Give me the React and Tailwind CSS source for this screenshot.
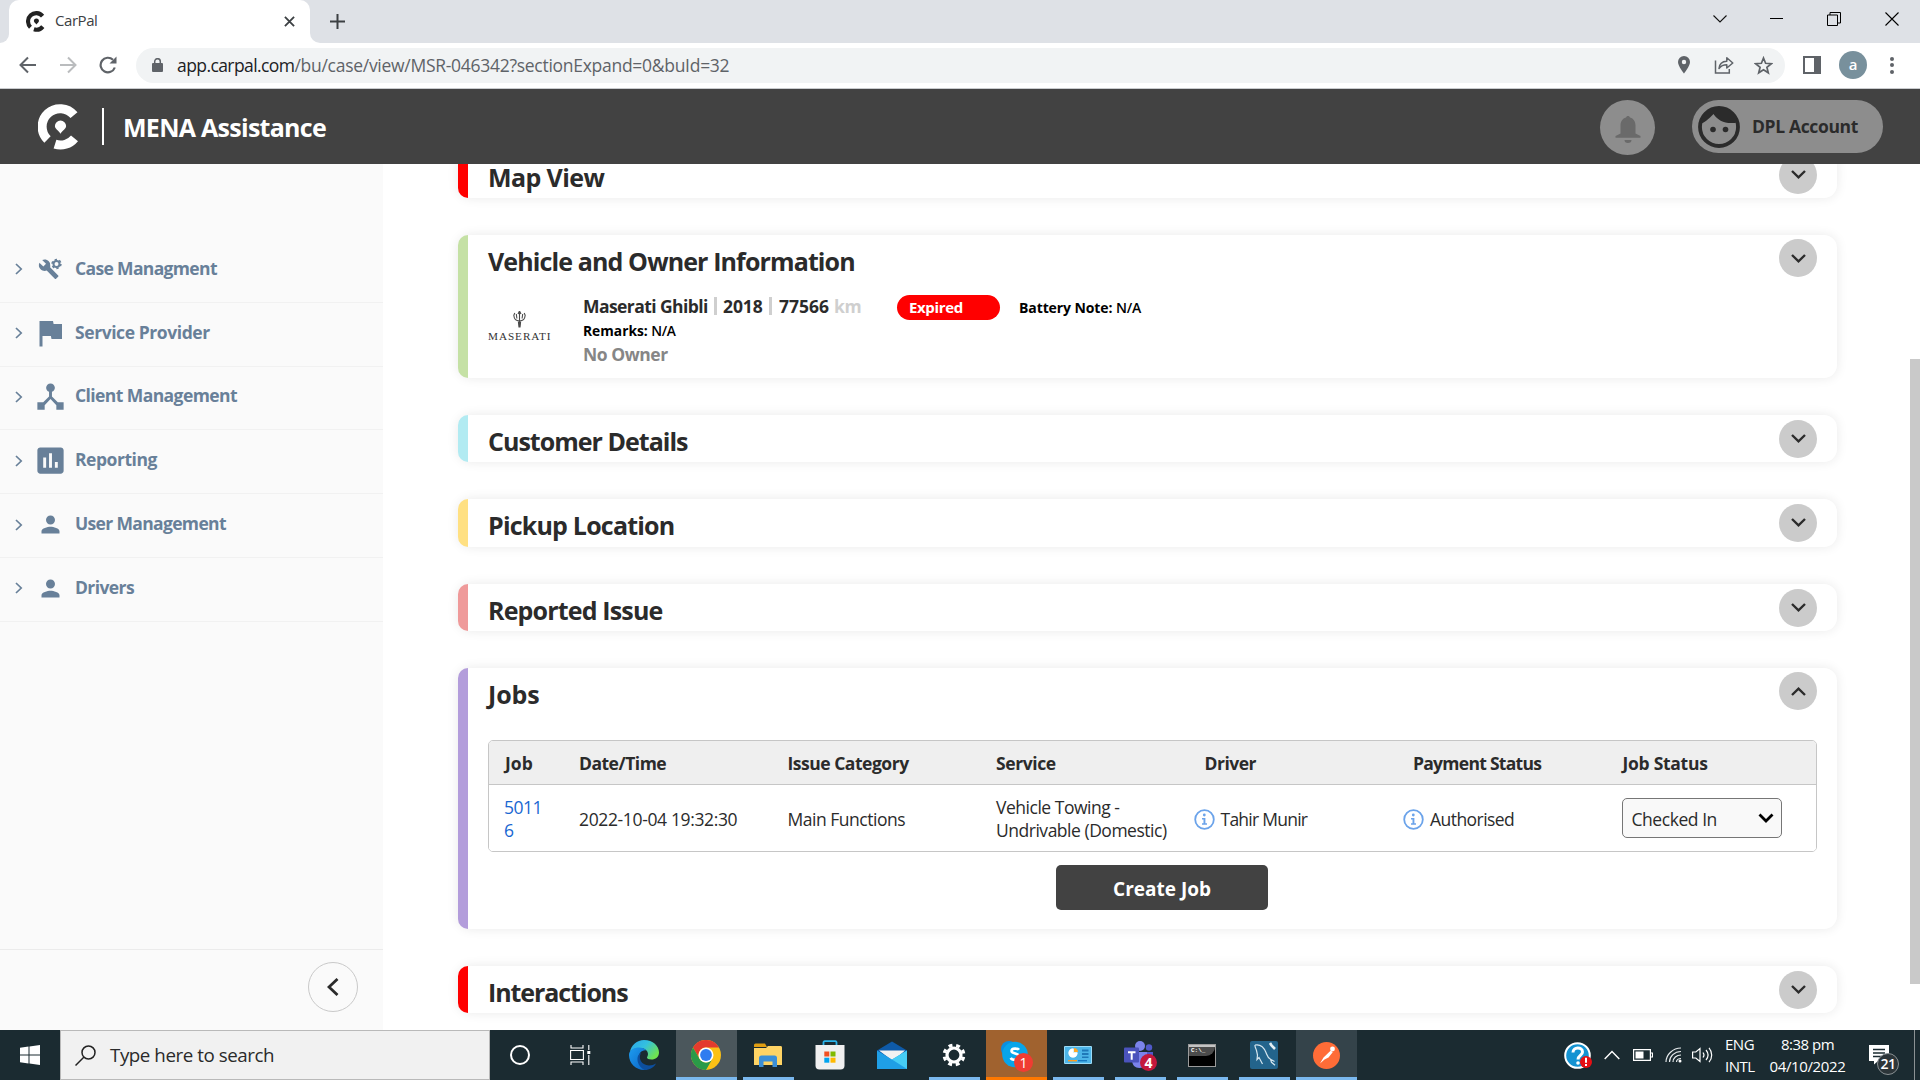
import React from "react";
import { MdFlag, MdDeviceHub, MdAssessment, MdPerson } from "react-icons/md";

function CarPalLogo({ className }) {
  return (
    <svg className={className} viewBox="0 0 41 46" fill="none">
      <path d="M9.500 35.500A18 18 0 1 1 36 11.200" stroke="currentColor" strokeWidth="9" />
      <path d="M17 40.100A18 18 0 0 0 36.500 34.300" stroke="currentColor" strokeWidth="9" />
      <path d="M22.500 16.500a5.600 5.600 0 0 1 5.600 5.600c0 2.700-3.600 4.500-5.600 7.600-2-3.100-5.600-4.900-5.600-7.600a5.600 5.600 0 0 1 5.600-5.600z" fill="currentColor" />
    </svg>
  );
}

function BrowserTabs() {
  return (
    <div className="flex h-[43px] bg-[#dee1e6]">
      <div className="flex w-[9px] bg-white">
        <div className="flex-1 rounded-br-[9px] bg-[#dee1e6]" />
      </div>
      <div className="flex h-[43px] w-[301px] items-center rounded-t-[10px] bg-white pl-[17px] pr-[15px] text-[#3c4043]">
        <CarPalLogo className="h-[21px] w-[19px] text-[#222]" />
        <span className="ml-[10px] pb-[3px] text-[15px] leading-[20px] tracking-[-0.45px]">CarPal</span>
        <svg className="ml-auto h-[11px] w-[11px]" viewBox="0 0 12 12" stroke="#3c4043" strokeWidth="2">
          <path d="M1 1l10 10M11 1L1 11" />
        </svg>
      </div>
      <div className="w-[11px] bg-white">
        <div className="h-full rounded-bl-[10px] bg-[#dee1e6]" />
      </div>
      <svg className="ml-[9px] mt-[14px] h-[15px] w-[15px]" viewBox="0 0 15 15" stroke="#3c4043" strokeWidth="2">
        <path d="M7.500 0v15M0 7.500h15" />
      </svg>
      <div className="ml-auto flex h-[37px] items-center pr-[21px]">
        <svg className="h-[8px] w-[14px]" viewBox="0 0 14 8" fill="none" stroke="#111" strokeWidth="1.1"><path d="M.5.5L7 7 13.500.5" /></svg>
        <svg className="ml-[43px] h-[14px] w-[14px]" viewBox="0 0 14 14" fill="none" stroke="#000"><path d="M0 6.500h13" /></svg>
        <svg className="ml-[43px] h-[14px] w-[14px]" viewBox="0 0 14 14" fill="none" stroke="#000"><path d="M.5 3h10v10.500H.5zM3 3V.5h10.500V11H11" /></svg>
        <svg className="ml-[44px] h-[14px] w-[14px]" viewBox="0 0 14 14" stroke="#000" strokeWidth="1.100"><path d="M.5.5l13 13M13.500.5l-13 13" /></svg>
      </div>
    </div>
  );
}

function BrowserToolbar() {
  return (
    <div className="flex h-[46px] items-center border-b border-[#c9cbce] bg-white pb-px">
      <svg className="ml-[19px] h-[18px] w-[18px]" viewBox="0 0 18 18" fill="none" stroke="#5f6368" strokeWidth="2"><path d="M17 9H2M9 1.500L1.500 9 9 16.500" /></svg>
      <svg className="ml-[22px] h-[18px] w-[18px]" viewBox="0 0 18 18" fill="none" stroke="#babcbe" strokeWidth="2"><path d="M1 9h15M9 1.500L16.500 9 9 16.500" /></svg>
      <svg className="ml-[22px] h-[18px] w-[18px]" viewBox="0 0 18 18" fill="none" stroke="#5f6368" strokeWidth="2.200"><path d="M15.800 11.500A7.300 7.300 0 1 1 14 3.800" /><path d="M17.500.5v7h-7z" fill="#5f6368" stroke="none" /></svg>
      <div className="ml-[19px] flex h-[35px] w-[1649px] items-center rounded-full bg-[#f1f3f4] pl-[16px] pr-[12px]">
        <svg className="h-[14px] w-[11px]" viewBox="0 0 11 14"><rect y="5" width="11" height="9" rx="1" fill="#5f6368" /><path d="M2.700 6V3.500a2.800 2.800 0 0 1 5.600 0V6" fill="none" stroke="#5f6368" strokeWidth="1.500" /></svg>
        <div className="ml-[14px] whitespace-nowrap text-[17.5px] leading-[24px] text-[#5f6368]">
          <span className="tracking-[-0.58px] text-[#202124]">app.carpal.com</span>
          <span className="tracking-[-0.28px]">/bu/case/view/MSR-046342?sectionExpand=0&amp;buId=32</span>
        </div>
        <svg className="ml-auto h-[18px] w-[12px]" viewBox="0 0 12 18"><path fillRule="evenodd" d="M6 0a6 6 0 0 1 6 6c0 4-6 11.500-6 11.500S0 10 0 6a6 6 0 0 1 6-6zm0 3.800a2.200 2.200 0 1 0 0 4.400 2.200 2.200 0 0 0 0-4.400z" fill="#5f6368" /></svg>
        <svg className="ml-[24px] h-[18px] w-[20px]" viewBox="0 0 20 18" fill="none" stroke="#5f6368" strokeWidth="1.500"><path d="M1.500 4.500V17h13.800v-4" /><path d="M5 12.500c.4-4.500 3-7 7.800-7.200V1.800L18.800 7l-6 5V8.800c-3.600 0-5.800 1-7.800 3.700z" strokeLinejoin="round" /></svg>
        <svg className="ml-[20px] h-[19px] w-[19px]" viewBox="0 0 19 19" fill="none" stroke="#5f6368" strokeWidth="1.700"><path d="M9.500 2l2.100 5.300 5.700.4-4.400 3.600 1.400 5.500-4.800-3-4.800 3 1.400-5.500-4.400-3.600 5.700-.4z" /></svg>
      </div>
      <div className="ml-[18px] flex h-[18px] w-[18px] border-[2.5px] border-[#5f6368]"><div className="ml-auto h-full w-[5px] bg-[#5f6368]" /></div>
      <div className="ml-[18px] flex h-[28px] w-[28px] items-center justify-center rounded-full bg-[#78909c] pb-[2px] text-[15px] font-semibold leading-none text-white">a</div>
      <div className="ml-[23px] flex flex-col gap-[2.5px]">
        <i className="h-[4px] w-[4px] rounded-full bg-[#5f6368]" />
        <i className="h-[4px] w-[4px] rounded-full bg-[#5f6368]" />
        <i className="h-[4px] w-[4px] rounded-full bg-[#5f6368]" />
      </div>
    </div>
  );
}

function AppHeader() {
  return (
    <div className="flex h-[75px] shrink-0 items-center bg-[#424242]">
      <CarPalLogo className="ml-[38px] h-[46px] w-[41px] text-white" />
      <div className="ml-[23px] h-[37px] w-[2px] bg-white" />
      <span className="ml-[19px] whitespace-nowrap text-[25px] font-bold leading-[34px] tracking-[-0.72px] text-white">MENA Assistance</span>
      <div className="ml-auto mt-[2px] flex h-[55px] w-[55px] items-center justify-center rounded-full bg-[#8d8d8d]">
        <svg className="mt-[4px] h-[27px] w-[26px]" viewBox="0 0 26 27" fill="#6a6a6a"><path d="M13 0c1 0 1.800.6 2 1.500 3.600 1 5.500 4 5.500 8V17.500l5 2.500v1.800H.5V20l5-2.500V9.500c0-4 1.900-7 5.500-8C11.200.6 12 0 13 0zM9.500 24h7a3.500 3 0 0 1-7 0z" /></svg>
      </div>
      <div className="ml-[37px] mr-[37px] flex h-[53px] w-[191px] items-center rounded-full bg-[#8d8d8d] pl-[6px]">
        <svg className="h-[42px] w-[42px]" viewBox="0 0 42 42"><circle cx="21" cy="21" r="19" fill="none" stroke="#2b2b2b" strokeWidth="3.800" /><path d="M2 18C6 17 11 13 15.500 8 20 15 28 18.500 39.500 16.500 37 6 29 2 21 2S4 8 2 18z" fill="#2b2b2b" /><circle cx="15" cy="23.500" r="2.800" fill="#2b2b2b" /><circle cx="27.500" cy="23.500" r="2.800" fill="#2b2b2b" /></svg>
        <span className="ml-[12px] whitespace-nowrap pb-[2px] text-[17.5px] font-bold leading-[24px] tracking-[-0.36px] text-[#2b2b2b]">DPL Account</span>
      </div>
    </div>
  );
}

function CaseIcon() {
  return (
    <svg className="h-[24px] w-[26px]" viewBox="0 0 26 24">
      <path transform="translate(1 1.500) scale(.89)" d="M22.700 19l-9.100-9.100c.9-2.300.4-5-1.500-6.900-2-2-5-2.400-7.400-1.300L9 6 6 9 1.600 4.700C.4 7.100.9 10.100 2.900 12.100c1.900 1.900 4.600 2.400 6.900 1.500l9.100 9.100c.4.400 1 .4 1.400 0l2.300-2.300c.5-.4.5-1.100.1-1.400z" fill="#688099" />
      <circle cx="19.500" cy="7" r="6.300" fill="#fafafa" />
      <circle cx="19.500" cy="7" r="3" fill="none" stroke="#688099" strokeWidth="2" />
      <circle cx="19.500" cy="7" r="4.400" fill="none" stroke="#688099" strokeWidth="1.600" strokeDasharray="2.300 2.300" />
    </svg>
  );
}

const NAV = [
  { label: "Case Managment", icon: <CaseIcon />, track: "tracking-[-0.65px]" },
  { label: "Service Provider", icon: <MdFlag className="h-[36px] w-[36px]" />, track: "tracking-[-0.42px]" },
  { label: "Client Management", icon: <MdDeviceHub className="h-[35px] w-[35px]" />, track: "tracking-[-0.58px]" },
  { label: "Reporting", icon: <MdAssessment className="h-[35px] w-[35px]" />, track: "tracking-[-0.46px]" },
  { label: "User Management", icon: <MdPerson className="h-[27px] w-[27px]" />, track: "tracking-[-0.66px]" },
  { label: "Drivers", icon: <MdPerson className="h-[27px] w-[27px]" />, track: "tracking-[-0.6px]" },
];

function Sidebar() {
  return (
    <div className="flex w-[383px] shrink-0 flex-col bg-[#fafafa] pt-[75px] text-[#688099]">
      {NAV.map((n) => (
        <div key={n.label} className="flex h-[63.8px] items-center border-b border-[#f1f1f1] pb-[2px]">
          <svg className="ml-[15px] h-[12px] w-[8px]" viewBox="0 0 8 12" fill="none" stroke="#688099" strokeWidth="1.700"><path d="M1 1l5.200 5L1 11" /></svg>
          <div className="ml-[7px] flex w-[40px] shrink-0 items-center justify-center">{n.icon}</div>
          <span className={`ml-[5px] whitespace-nowrap pb-[3px] text-[17.5px] font-bold leading-[24px] ${n.track}`}>{n.label}</span>
        </div>
      ))}
      <div className="mt-auto flex h-[81px] justify-end border-t border-[#ebebeb] pr-[25px] pt-[12px]">
        <div className="flex h-[50px] w-[50px] items-center justify-center rounded-full border border-[#c9c9c9]">
          <svg className="h-[18px] w-[12px]" viewBox="0 0 12 18" fill="none" stroke="#2b2b2b" strokeWidth="2.800"><path d="M10.500 1L2 9l8.500 8" /></svg>
        </div>
      </div>
    </div>
  );
}

function Section({ title, bar, track, size, open, children }) {
  return (
    <div className={`flex shrink-0 rounded-[13px] bg-white shadow-[0_0_12px_rgba(0,0,0,0.09)] ${size}`}>
      <div className={`w-[10px] shrink-0 rounded-l-[10px] ${bar}`} />
      <div className="min-w-0 flex-1 pl-[20px] pr-[20px]">
        <div className="flex h-[47px] justify-between">
          <h2 className={`mt-[14px] h-[24px] whitespace-nowrap text-[25px] font-bold leading-[24px] text-[#2b2b2b] ${track}`}>{title}</h2>
          <div className={`flex h-[38px] w-[38px] items-center justify-center rounded-full bg-[#cbcbcb] ${children ? "mt-[4px]" : "mt-[4.500px]"}`}>
            <svg className={`h-[9px] w-[15px] ${open ? "rotate-180" : ""}`} viewBox="0 0 15 9" fill="none" stroke="#2b2b2b" strokeWidth="2.400"><path d="M1 1l6.500 6.300L14 1" /></svg>
          </div>
        </div>
        {children}
      </div>
    </div>
  );
}

function VehicleInfo() {
  return (
    <div className="flex">
      <div className="mt-[27px] flex w-[95px] flex-col pt-[2px]">
        <svg className="ml-[25px] h-[17px] w-[13px]" viewBox="0 0 13 17" fill="none" stroke="#4a4a4a" strokeWidth="1.100"><path d="M6.500 0v16M5 3l1.500-3L8 3M1.800 2l-1 2.300c.3 3.700 2 5.700 5.700 5.700s5.400-2 5.700-5.700l-1-2.300M3.300 3l.6 4.500M9.700 3l-.6 4.500" /><path d="M4.800 10.500h3.400L7.500 16.500h-2z" fill="#4a4a4a" stroke="none" /></svg>
        <span className="mt-[1px] font-['Liberation_Serif',serif] text-[11.2px] leading-[14px] tracking-[0.95px] text-[#333]">MASERATI</span>
      </div>
      <div className="w-[314px] pt-[12px] text-[#2b2b2b]">
        <div className="flex h-[24px] whitespace-nowrap text-[17.5px] font-bold leading-[24px]">
          <span className="w-[131px] tracking-[-0.58px]">Maserati Ghibli</span>
          <span className="mt-[3px] h-[18px] w-[3px] bg-[#cfcfcf]" />
          <span className="ml-[6px] w-[46px] tracking-[-0.1px]">2018</span>
          <span className="mt-[3px] h-[18px] w-[3px] bg-[#cfcfcf]" />
          <span className="ml-[7px] w-[55px] tracking-[-0.02px]">77566</span>
          <span className="tracking-[-0.4px] text-[#cfcfcf]">km</span>
        </div>
        <div className="mt-[2px] h-[21px] whitespace-nowrap text-[13.8px] leading-[21px] text-black"><b>Remarks:</b> <span className="font-semibold tracking-[-0.4px]">N/A</span></div>
        <div className="mt-px text-[17.5px] font-bold leading-[24px] tracking-[-0.45px] text-[#868686]">No Owner</div>
      </div>
      <div className="mt-[13px] h-[25px] w-[103px] rounded-full bg-[#ff0000] pl-[12px] text-[15px] font-bold leading-[25px] tracking-[-0.35px] text-white">Expired</div>
      <div className="ml-[19px] mt-[13px] whitespace-nowrap text-[14px] leading-[25px] text-black"><b className="tracking-[-0.1px]">Battery Note:</b> <span className="font-semibold tracking-[-0.2px]">N/A</span></div>
    </div>
  );
}

function Info() {
  return (
    <svg className="h-[21px] w-[21px]" viewBox="0 0 21 21"><circle cx="10.500" cy="10.500" r="9.300" fill="none" stroke="#6ba3ea" strokeWidth="1.800" /><circle cx="10.300" cy="6" r="1.400" fill="#6ba3ea" /><path d="M8 9h3.400v5.200H13v1.600H8v-1.600h1.500v-3.600H8z" fill="#6ba3ea" /></svg>
  );
}

function Jobs() {
  return (
    <div className="pt-[25px]">
      <div className="h-[112px] w-[1329px] overflow-hidden rounded-[5px] border border-[#c6c6c6] whitespace-nowrap text-[17.5px] text-[#2b2b2b]">
        <div className="grid h-[44px] grid-cols-[75px_208.500px_208.500px_208.500px_208.500px_208.500px_1fr] border-b border-[#c6c6c6] bg-[#efefef] pl-[15px] font-bold leading-[45px]">
          <span className="pl-px">Job</span>
          <span className="tracking-[-0.5px]">Date/Time</span>
          <span className="tracking-[-0.48px]">Issue Category</span>
          <span className="tracking-[-0.4px]">Service</span>
          <span className="tracking-[-0.5px]">Driver</span>
          <span className="tracking-[-0.72px]">Payment Status</span>
          <span className="pl-px tracking-[-0.28px]">Job Status</span>
        </div>
        <div className="grid h-[66px] grid-cols-[75px_208.500px_208.500px_208.500px_208.500px_208.500px_1fr] items-center bg-white pl-[15px]">
          <span className="w-[38px] pt-[2px] leading-[23px] tracking-[-0.5px] text-[#1967d2]">5011<br />6</span>
          <span className="pt-[2px] tracking-[-0.36px]">2022-10-04 19:32:30</span>
          <span className="pt-[2px] tracking-[-0.48px]">Main Functions</span>
          <span className="pt-[2px] leading-[23px] tracking-[-0.48px]">Vehicle Towing -<br />Undrivable (Domestic)</span>
          <span className="-ml-[11px] flex items-center gap-[6px] pt-[2px]"><Info /><span className="tracking-[-0.75px]">Tahir Munir</span></span>
          <span className="-ml-[10px] flex items-center gap-[6px] pt-[2px]"><Info /><span className="tracking-[-0.55px]">Authorised</span></span>
          <div className="flex h-[40px] w-[160px] items-center justify-between rounded-[5px] border border-[#767676] bg-[#f9f9f9] pl-[9px] pr-[7px]">
            <span className="pt-[3px] tracking-[-0.45px]">Checked In</span>
            <svg className="h-[10px] w-[16px]" viewBox="0 0 16 10" fill="none" stroke="#000" strokeWidth="2.800"><path d="M1.500 1.500L8 8l6.500-6.500" /></svg>
          </div>
        </div>
      </div>
      <div className="ml-[568px] mt-[13px] h-[45px] w-[212px] rounded-[5px] bg-[#424242] text-center text-[19px] font-bold leading-[48px] text-white">Create Job</div>
    </div>
  );
}

function EdgeIcon() {
  return (
    <svg className="h-[30px] w-[30px]" viewBox="0 0 30 30">
      <defs>
        <linearGradient id="edgeTop" x1="0" x2="1" y1="0" y2=".6"><stop offset="0" stopColor="#2ba4ea" /><stop offset=".5" stopColor="#33c0e0" /><stop offset="1" stopColor="#6fe34f" /></linearGradient>
        <linearGradient id="edgeSide" x1="0" x2="1" y1="0" y2="1"><stop offset="0" stopColor="#1d9df0" /><stop offset="1" stopColor="#0b62c4" /></linearGradient>
      </defs>
      <path d="M1 12C2 5 8 0 15 0c9 0 15 6 15 12.500 0 4.500-3.500 7-7.500 7-3 0-4.500-1-4.500-2 0-.8 1-1.500 1-3.500 0-3-3-6-8-6-4.500 0-8 1.500-10 4z" fill="url(#edgeTop)" />
      <path d="M0 15c0-5 5-7.500 10-7.500 3 0 6 1 7.500 3-4.500-1-8 3-8 7.500 0 6 4 11 9 11.500-1 .3-2.300.5-3.500.5C7 30 0 23.500 0 15z" fill="url(#edgeSide)" />
      <path d="M12 13c-3 5 0 12 8 12.500 3 0 5-.8 7-2-2 4-6.500 6.500-11.500 6.500C11 27.500 8 23 8.500 18c.3-2.500 1.500-4 3.500-5z" fill="#0d4f9e" />
    </svg>
  );
}
function ChromeIcon() {
  return (
    <svg className="h-[30px] w-[30px]" viewBox="0 0 30 30">
      <circle cx="15" cy="15" r="15" fill="#fbc116" />
      <path d="M2 7.500A15 15 0 0 1 28 7.500H15A7.500 7.500 0 0 0 8.500 18.800z" fill="#e33b2e" />
      <path d="M2 7.500A15 15 0 0 0 15 30l6.500-11.300A7.500 7.500 0 0 1 8.500 18.750z" fill="#2a9a48" />
      <circle cx="15" cy="15" r="7.500" fill="#fff" />
      <circle cx="15" cy="15" r="5.900" fill="#2f7cf0" />
    </svg>
  );
}
function ExplorerIcon() {
  return (
    <svg className="h-[24px] w-[28px]" viewBox="0 0 28 24">
      <path d="M0 2a1.500 1.500 0 0 1 1.500-1.500H11L13 4H0z" fill="#e09e12" />
      <path d="M0 5h12l2-2h12.500A1.500 1.500 0 0 1 28 4.500V22H0z" fill="#ffd465" />
      <path d="M5 24v-9a2.500 2.500 0 0 1 2.500-2.500h13A2.500 2.500 0 0 1 23 15v9h-4.500v-5.500h-9V24z" fill="#3b8fd8" />
    </svg>
  );
}
function StoreIcon() {
  return (
    <svg className="h-[30px] w-[30px]" viewBox="0 0 30 30">
      <path d="M8.500 6V2.500A1.200 1.200 0 0 1 9.700 1.200h10.600a1.200 1.200 0 0 1 1.200 1.300V6" fill="none" stroke="#2bb4ea" strokeWidth="1.800" />
      <path d="M.5 5h29v20.500a4 4 0 0 1-4 4h-21a4 4 0 0 1-4-4z" fill="#f0f0f0" />
      <path d="M9.300 11.500h5v5h-5z" fill="#f25022" /><path d="M15.500 11.500h5v5h-5z" fill="#7fba00" /><path d="M9.300 17.700h5v5h-5z" fill="#00a4ef" /><path d="M15.500 17.700h5v5h-5z" fill="#ffb900" />
    </svg>
  );
}
function MailIcon() {
  return (
    <svg className="h-[29px] w-[30px]" viewBox="0 0 30 29">
      <path d="M0 9.500L15 .5l15 9V20H0z" fill="#0e5aa8" />
      <path d="M2 9.500h26L16 20z" fill="#f2f2f2" />
      <path d="M0 9.500L15 18.500l15-9V28H0z" fill="#1f9fe6" />
      <path d="M30 9.500L15 18.500 30 28z" fill="#46cdf5" />
    </svg>
  );
}
function SettingsIcon() {
  return (
    <svg className="h-[24px] w-[24px]" viewBox="0 0 24 24" fill="none" stroke="#fff">
      <circle cx="12" cy="12" r="7" strokeWidth="3.200" />
      <circle cx="12" cy="12" r="9.800" strokeWidth="3.200" strokeDasharray="3.900 3.797" strokeDashoffset="-1.900" />
    </svg>
  );
}
function SkypeIcon() {
  return (
    <div className="relative h-[30px] w-[30px]">
      <svg className="h-[30px] w-[30px]" viewBox="0 0 30 30"><circle cx="8" cy="9" r="8" fill="#0a8fe0" /><circle cx="20" cy="22" r="7" fill="#0a8fe0" /><circle cx="14" cy="14.500" r="12.800" fill="#08a5ea" /><path d="M18 9.800c-1-1.500-7.500-2-7.500 1.200s8 2 8 5.800-7.500 3.600-8.800 1" fill="none" stroke="#fff" strokeWidth="2.600" /></svg>
      <span className="absolute left-[13px] top-[13px] flex h-[19px] w-[19px] items-center justify-center rounded-full bg-[#f03c32] text-[14px] leading-none text-white">1</span>
    </div>
  );
}
function PanelIcon() {
  return (
    <svg className="h-[18px] w-[28px]" viewBox="0 0 28 18"><rect width="28" height="18" rx="1" fill="#9bdcf8" /><rect x="1" y="1" width="26" height="16" fill="#4db5e8" /><circle cx="9" cy="7" r="4.500" fill="#d9f1fc" /><path d="M9 7V2.500A4.500 4.500 0 1 0 13.500 7z" fill="#fff" /><path d="M10 6V2a4.300 4.300 0 0 1 4 4z" fill="#ffa726" /><path d="M18 3.500h6.500v2H18zM18 7h6.500v2H18zM18 10.500h6.500v1.500H18z" fill="#1f78b8" /><path d="M4 14h9v1.400H4z" fill="#ff9d1e" /><path d="M14 14h9v1.400h-9z" fill="#1778c0" /></svg>
  );
}
function TeamsIcon() {
  return (
    <div className="relative h-[30px] w-[32px]">
      <svg className="h-[30px] w-[32px]" viewBox="0 0 32 30"><circle cx="16" cy="6" r="5" fill="#7b83eb" /><circle cx="25" cy="7.500" r="3.200" fill="#5059c9" /><path d="M22 12h7v8a4 4 0 0 1-7 2z" fill="#5059c9" /><path d="M8 12h15v8c0 5-3 8-7.500 8S8 25 8 20z" fill="#7b83eb" /><rect y="7.500" width="15" height="15" rx="1" fill="#4b53bc" /><path d="M4 11.300h7.500v1.900H8.700v6.500h-2v-6.500H4z" fill="#fff" /></svg>
      <span className="absolute left-[16px] top-[14px] flex h-[17px] w-[17px] items-center justify-center rounded-full bg-[#c4183c] text-[14px] font-bold leading-none text-white">4</span>
    </div>
  );
}
function CmdIcon() {
  return (
    <div className="h-[23px] w-[28px] border border-[#9b9b9b] bg-black">
      <div className="h-[2px] bg-[#c4c4c4]" />
      <div className="h-[9px] rounded-br-[14px] bg-[#4c4c4c] pl-[2px] font-['Liberation_Mono',monospace] text-[6px] font-bold leading-[8px] text-white">C:\_</div>
    </div>
  );
}
function MysqlIcon() {
  return (
    <svg className="h-[28px] w-[28px]" viewBox="0 0 28 28"><rect width="28" height="28" rx="2" fill="#23648c" /><path d="M5 4c5-1 9 2.500 11 7.500 1.200 3 1.700 5.200 4.500 6.800l4 2.200M5 4c-.3 2 1 3.500 1.500 5.500L7.500 14 7 18.500l2-2L12.500 23M20.500 18.300l1 3 3.500 3" fill="none" stroke="#d5e6ef" strokeWidth="1.200" /><path d="M20 2l1.500 2.500L25 8" stroke="#e4eef3" strokeWidth="2.600" fill="none" /></svg>
  );
}
function PostmanIcon() {
  return (
    <svg className="h-[27px] w-[27px]" viewBox="0 0 27 27"><circle cx="13.500" cy="13.500" r="13.500" fill="#ff6c37" /><circle cx="19.500" cy="7" r="2.400" fill="#fff" /><path d="M17.800 8.500l1.900 1.800-4.200 5.200-4 2-4.500 4 3.500-6z" fill="#fff" /></svg>
  );
}
function TaskViewIcon() {
  return (
    <svg className="mr-[4px] h-[20px] w-[21px]" viewBox="0 0 21 20" fill="none" stroke="#fff" strokeWidth="1.100"><path d="M.6 5.500h12.800v9H.6zM1 0v3h12V0M1 20v-3h12v3M18.800 0v5M18.800 10v10" /><path d="M17.300 6h3v3h-3z" fill="#fff" stroke="none" /></svg>
  );
}

const TASKS = [
  { icon: <div className="h-[20px] w-[20px] rounded-full border-[2.5px] border-white" /> },
  { icon: <TaskViewIcon /> },
  { icon: <EdgeIcon /> },
  { icon: <ChromeIcon />, slot: "w-[61px] bg-[#4b575c]", line: "w-[61px] bg-[#7ab8ee]" },
  { icon: <ExplorerIcon />, line: "w-[51px] bg-[#7ab8ee]" },
  { icon: <StoreIcon /> },
  { icon: <MailIcon /> },
  { icon: <SettingsIcon />, line: "w-[51px] bg-[#7ab8ee]" },
  { icon: <SkypeIcon />, slot: "w-[61px] bg-[#a0622f]", line: "w-[61px] bg-[#ff7800]" },
  { icon: <PanelIcon />, line: "w-[51px] bg-[#7ab8ee]" },
  { icon: <TeamsIcon />, line: "w-[51px] bg-[#7ab8ee]" },
  { icon: <CmdIcon />, line: "w-[51px] bg-[#7ab8ee]" },
  { icon: <MysqlIcon />, line: "w-[51px] bg-[#7ab8ee]" },
  { icon: <PostmanIcon />, slot: "w-[61px] bg-[#34434a]", line: "w-[61px] bg-[#7ab8ee]" },
];

function Taskbar() {
  return (
    <div className="flex h-[50px] bg-[#1b2b31] text-white">
      <div className="flex w-[60px] items-center justify-center">
        <svg className="h-[20px] w-[20px]" viewBox="0 0 20 20" fill="#fff"><path d="M0 2.800L8.500 1.600v7.900H0zM9.500 1.400L20 0v9.500H9.500zM0 10.500h8.500v7.900L0 17.200zM9.500 10.500H20V20L9.500 18.600z" /></svg>
      </div>
      <div className="flex w-[430px] items-center border border-[#b9b9b9] bg-[#f1f1f1] pl-[14px] text-[#2a2a2a]">
        <svg className="h-[21px] w-[21px]" viewBox="0 0 21 21" fill="none" stroke="#222" strokeWidth="1.500"><circle cx="13.500" cy="7.500" r="6.500" /><path d="M9 12L.5 20.500" /></svg>
        <span className="ml-[14px] whitespace-nowrap text-[18.75px] leading-[26px] tracking-[-0.45px]">Type here to search</span>
      </div>
      <div className="-ml-px flex">
        {TASKS.map((t, i) => (
          <div key={i} className="flex w-[62px] justify-center">
            <div className={`flex h-[50px] flex-col items-center ${t.slot || ""}`}>
              <div className="flex h-[47px] items-center justify-center pt-[3px]">{t.icon}</div>
              {t.line && <div className={`h-[3px] ${t.line}`} />}
            </div>
          </div>
        ))}
      </div>
      <div className="ml-auto flex items-center">
        <div className="mr-[12px] h-[27px] w-[28px]">
          <svg className="h-[27px] w-[28px]" viewBox="0 0 28 27"><circle cx="13.500" cy="13.500" r="12.300" fill="#1493d2" stroke="#fff" strokeWidth="2" /><path d="M9 10.500c0-6 9.500-6 9.500-.5 0 3.500-4.500 3.500-4.500 7.500" fill="none" stroke="#fff" strokeWidth="3" /><circle cx="14" cy="21" r="1.800" fill="#fff" /><circle cx="22" cy="20" r="6" fill="#e60f14" /><path d="M22 15.800v5M22 22v2" stroke="#fff" strokeWidth="2" /></svg>
        </div>
        <svg className="h-[10px] w-[16px]" viewBox="0 0 16 10" fill="none" stroke="#fff" strokeWidth="1.400"><path d="M.7 9L8 1.500 15.300 9" /></svg>
        <svg className="ml-[13px] h-[12px] w-[20px]" viewBox="0 0 20 12"><path d="M.6.6h16.800v10.800H.6zM18 4h1.500v4H18" fill="none" stroke="#fff" strokeWidth="1.200" /><path d="M2.500 2.500h8v7h-8z" fill="#fff" /></svg>
        <svg className="ml-[12px] h-[16px] w-[17px]" viewBox="0 0 17 16" fill="none" stroke="#e8ecee" strokeWidth="1.200"><path d="M1 15C1 7.500 8 1 16 1M4.500 15c0-5.500 5-10.500 11.500-10.500M8 15c0-4 3.500-7 8-7M11.500 15c0-2 2-3.500 4.500-3.500" /><circle cx="15" cy="14" r="1.500" fill="#fff" stroke="none" /></svg>
        <svg className="ml-[10px] h-[18px] w-[21px]" viewBox="0 0 21 18" fill="none" stroke="#fff" strokeWidth="1.200"><path d="M.6 6v6h3.200L8 15.500v-13L3.800 6zM11 6.500c1.200 1.500 1.200 3.500 0 5M14 4c2.500 3 2.500 7 0 10M17 1.800c3.600 4.200 3.600 10.200 0 14.400" /></svg>
        <div className="ml-[12px] w-[29px] text-[15px] leading-[22px] tracking-[-0.5px]">ENG<br />INTL</div>
        <div className="ml-[15px] w-[77px] whitespace-nowrap text-center text-[15px] leading-[22px]"><span className="tracking-[-0.5px]">8:38 pm</span><br /><span className="tracking-[-0.37px]">04/10/2022</span></div>
        <div className="relative ml-[23px] mt-[10px] h-[30px] w-[31px]">
          <svg className="h-[20px] w-[20px]" viewBox="0 0 20 20"><path d="M0 0h20v16H9l-4 3.500V16H0z" fill="#fff" /><path d="M4 4.500h12M4 8h12M4 11.500h8" stroke="#1b2b31" strokeWidth="1.300" /></svg>
          <span className="absolute left-[8px] top-[8px] flex h-[22px] w-[22px] items-center justify-center rounded-full border border-[#8a9194] bg-[#2c3539] text-[14px] font-semibold leading-none tracking-[-0.4px]">21</span>
        </div>
        <div className="ml-[14px] mr-[5px] h-[50px] w-px bg-[#8b9294]" />
      </div>
    </div>
  );
}

export default function App() {
  return (
    <div className="flex h-[1080px] w-[1920px] flex-col overflow-hidden bg-white font-['Open_Sans','Noto_Sans',sans-serif]">
      <BrowserTabs />
      <BrowserToolbar />
      <AppHeader />
      <div className="flex h-[866px] overflow-hidden">
        <Sidebar />
        <div className="flex flex-1 flex-col pl-[75px]">
          <div className="-mt-[13px] flex w-[1379px] flex-col gap-[37px]">
            <Section title="Map View" bar="bg-[#ff0000]" size="h-[47px]" track="tracking-[-0.6px]" />
            <Section title="Vehicle and Owner Information" bar="bg-[#c5e1a5]" size="h-[143px]" track="tracking-[-0.88px]"><VehicleInfo /></Section>
            <Section title="Customer Details" bar="bg-[#b2ebf2]" size="h-[47px]" track="tracking-[-0.98px]" />
            <Section title="Pickup Location" bar="bg-[#ffe082]" size="h-[48px]" track="tracking-[-0.8px]" />
            <Section title="Reported Issue" bar="bg-[#ef9a9a]" size="h-[47px]" track="tracking-[-0.84px]" />
            <Section title="Jobs" bar="bg-[#b39ddb]" size="h-[261px]" track="tracking-[-0.1px]" open><Jobs /></Section>
            <Section title="Interactions" bar="bg-[#ff0000]" size="h-[47px]" track="tracking-[-1.08px]" />
          </div>
        </div>
        <div className="w-[10px] pt-[195px]"><div className="h-[625px] bg-[#c9c9c9]" /></div>
      </div>
      <Taskbar />
    </div>
  );
}
